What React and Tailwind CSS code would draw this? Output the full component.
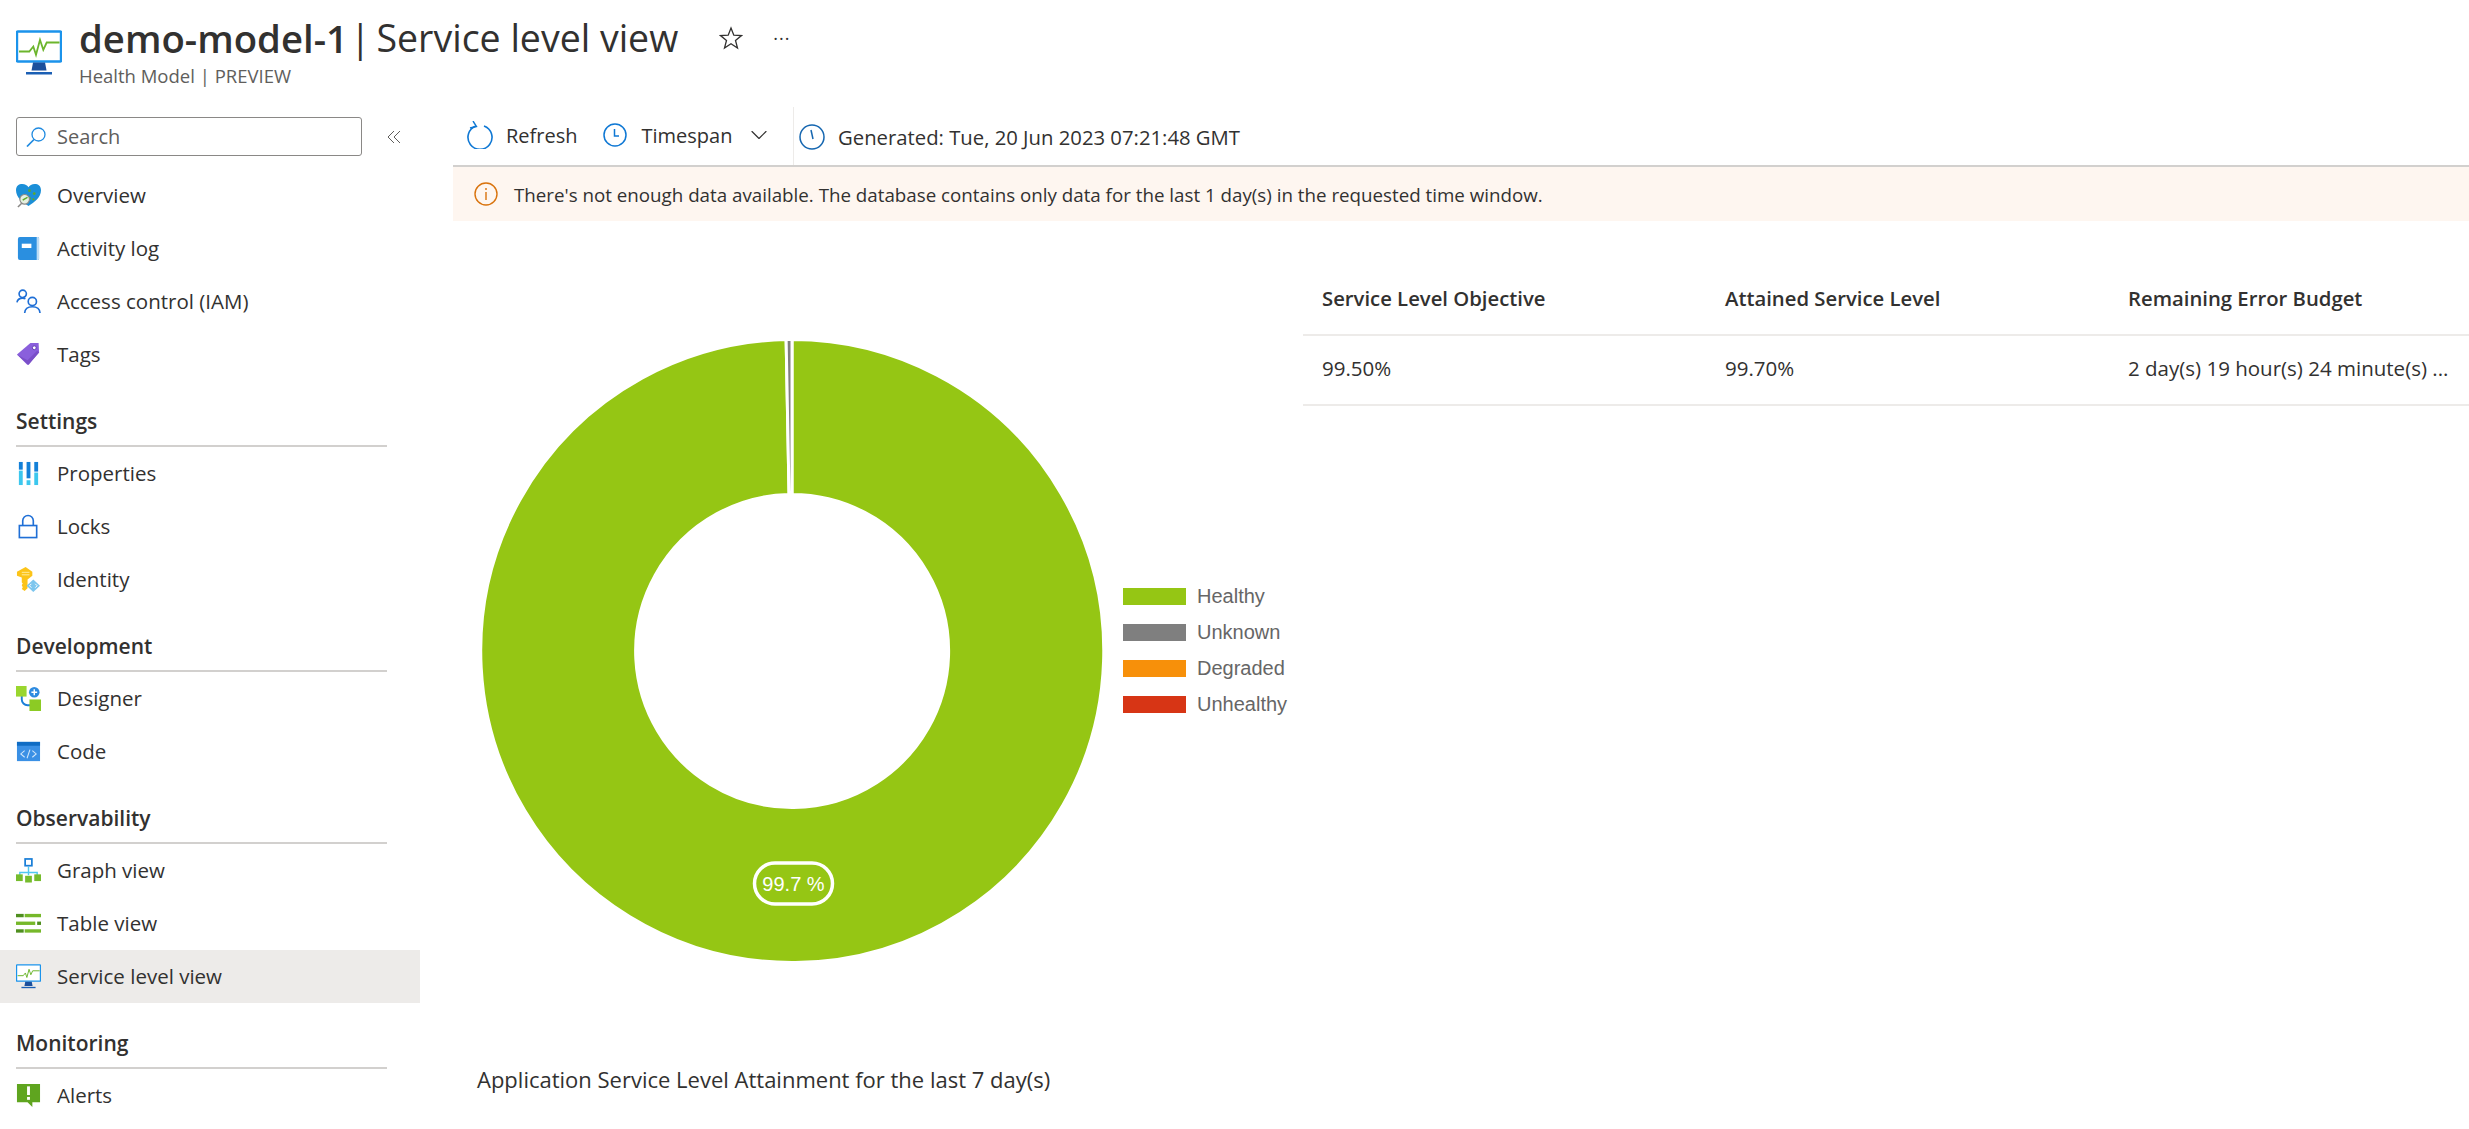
import { ChevronDown } from 'lucide-react';

const FONT = '"Open Sans", "Noto Sans", sans-serif';

function MonitorIcon({ className }) {
  return (
    <svg viewBox="0 0 46 45" className={className}>
      <rect x="1" y="1" width="44" height="30" rx="1" fill="#fff" stroke="#1b93eb" strokeWidth="2.4" />
      <path d="M17 32h12l1.5 8h-15z" fill="#1b4f9c" />
      <path d="M10 41.5h26V44H10z" fill="#1b5fb4" />
      <polyline points="3,21 13.3,21 17.3,16 20,24.3 24,9.3 27.3,19.3 30.7,12 43.5,12" fill="none" stroke="#6cb52d" strokeWidth="1.8" />
    </svg>
  );
}

function HeartIcon() {
  return (
    <svg viewBox="0 0 26 26" className="h-[25px] w-[25px]">
      <path d="M13 24C7 20 0 15 0 7.500 0 3 3 1 6.500 1 9.500 1 12 2.500 13 4.500 14 2.500 16.500 1 19.500 1 23 1 26 3 26 7.500 26 15 19 20 13 24z" fill="#1b8fd8" />
      <circle cx="14" cy="8" r="1.400" fill="#5ea82a" />
      <circle cx="19" cy="11" r="1.400" fill="#5ea82a" />
      <circle cx="14" cy="16" r="1.400" fill="#5ea82a" />
      <circle cx="18" cy="17" r="1.200" fill="#5ea82a" />
      <circle cx="9" cy="17" r="5" fill="#e6f0e0" stroke="#8a8886" strokeWidth="1.200" />
      <path d="M6 21l-4 4" stroke="#8a8886" strokeWidth="1.600" />
      <path d="M7 18c2-2 3-2 5-3" stroke="#5ea82a" strokeWidth="1.500" fill="none" />
    </svg>
  );
}

function BookIcon() {
  return (
    <svg viewBox="0 0 26 26" className="h-[25px] w-[25px]">
      <path d="M4 1h19a1 1 0 0 1 1 1v22a1 1 0 0 1-1 1H4a2 2 0 0 1-2-2V3a2 2 0 0 1 2-2z" fill="#2a8fe0" />
      <path d="M21.500 1H23a1 1 0 0 1 1 1v22a1 1 0 0 1-1 1h-1.500z" fill="#bcdcf5" />
      <rect x="6" y="8" width="10" height="4.500" fill="#fff" />
    </svg>
  );
}

function PeopleIcon() {
  return (
    <svg viewBox="0 0 26 26" className="h-[25px] w-[25px]" fill="none" stroke="#1f6fd6" strokeWidth="1.700">
      <circle cx="7" cy="5" r="3.800" />
      <path d="M1 14c.5-3 3-4.500 6-4.500 1 0 2 .2 2.800.6" />
      <circle cx="17" cy="13" r="4.300" />
      <path d="M9 25c.3-4 3.500-6.500 8-6.500s7.700 2.500 8 6.500" />
    </svg>
  );
}

function TagIcon() {
  return (
    <svg viewBox="0 0 26 26" className="h-[25px] w-[25px]">
      <path d="M1 13L15 1h8.500L24 11 12 24z" fill="#8a5fdc" />
      <path d="M1 13l12 11 11-13-2-2-10 10z" fill="#7a4fc8" />
      <circle cx="19" cy="6" r="2" fill="#fff" stroke="#5f3ab0" />
    </svg>
  );
}

function PropertiesIcon() {
  return (
    <svg viewBox="0 0 26 26" className="h-[25px] w-[25px]">
      <rect x="3" y="1" width="4" height="8" fill="#1380d8" />
      <rect x="3" y="10" width="4" height="15" fill="#3cc7ee" />
      <rect x="11" y="1" width="4" height="17" fill="#1380d8" />
      <rect x="11" y="20" width="4" height="5" fill="#3cc7ee" />
      <rect x="19" y="1" width="4" height="10" fill="#1380d8" />
      <rect x="19" y="12" width="4" height="13" fill="#3cc7ee" />
    </svg>
  );
}

function LockIcon() {
  return (
    <svg viewBox="0 0 26 26" className="h-[25px] w-[25px]" fill="none" stroke="#1f6fd6" strokeWidth="1.700">
      <rect x="3.500" y="12" width="18" height="12.500" />
      <path d="M7 12V7a5.500 5.500 0 0 1 11 0v5" />
    </svg>
  );
}

function KeyIcon() {
  return (
    <svg viewBox="0 0 26 26" className="h-[25px] w-[25px]">
      <path d="M10 0l7 5v4l-5 4v9l-3 3-3-2 1-2-1-2 1-2-1-1v-5L1 9V5z" fill="#fcc419" />
      <rect x="6" y="5" width="8" height="1.200" fill="#fde68a" />
      <rect x="6" y="7.500" width="8" height="1.200" fill="#fde68a" />
      <path d="M18 13l7 6.500-7 6.500-7-6.500z" fill="#7cc6ee" />
      <path d="M16 17.500l-2 2 2 2M20 17.500l2 2-2 2" stroke="#fff" strokeWidth="1" fill="none" />
    </svg>
  );
}

function DesignerIcon() {
  return (
    <svg viewBox="0 0 26 26" className="h-[25px] w-[25px]">
      <path d="M6 10v4a6 6 0 0 0 6 6h3" fill="none" stroke="#1b7fd8" strokeWidth="2" />
      <rect x="0" y="0" width="11" height="11" fill="#9ad62f" />
      <rect x="14" y="14" width="12" height="12" fill="#8ccb24" />
      <circle cx="19" cy="6.500" r="5.500" fill="#2e8be0" />
      <path d="M19 3.500v6M16 6.500h6" stroke="#fff" strokeWidth="1.500" />
    </svg>
  );
}

function CodeIcon() {
  return (
    <svg viewBox="0 0 26 26" className="h-[25px] w-[25px]">
      <rect x="1" y="3" width="24" height="20" fill="#3a90e5" />
      <rect x="1" y="3" width="24" height="4" fill="#0f6cc4" />
      <path d="M9 12l-4 3.500L9 19M17 12l4 3.500-4 3.500M14.500 11l-3 9" fill="none" stroke="#cfe6fa" strokeWidth="1.100" />
    </svg>
  );
}

function GraphIcon() {
  return (
    <svg viewBox="0 0 26 26" className="h-[25px] w-[25px]">
      <path d="M13 9v9M4 18v-3h18v3" fill="none" stroke="#50c8f0" strokeWidth="1.500" />
      <rect x="9.500" y="1" width="7" height="7" fill="#fff" stroke="#1b7fd8" strokeWidth="1.800" />
      <rect x="0" y="17" width="7" height="7" fill="#76bc2d" />
      <rect x="9.500" y="18.500" width="7" height="7" fill="#76bc2d" />
      <rect x="19" y="17" width="7" height="7" fill="#76bc2d" />
    </svg>
  );
}

function TableIcon() {
  return (
    <svg viewBox="0 0 26 26" className="h-[25px] w-[25px]">
      <rect x="0" y="3" width="8" height="3.500" fill="#4f8f1f" />
      <rect x="9" y="3" width="17" height="3.500" fill="#76b82a" />
      <rect x="0" y="11" width="20" height="3.500" fill="#76b82a" />
      <rect x="22" y="11" width="4" height="3.500" fill="#4f8f1f" />
      <rect x="0" y="19" width="8" height="3.500" fill="#4f8f1f" />
      <rect x="9" y="19" width="17" height="3.500" fill="#76b82a" />
    </svg>
  );
}

function AlertIcon() {
  return (
    <svg viewBox="0 0 26 26" className="h-[25px] w-[25px]">
      <path d="M1 1h24v19H17v5l-5-5H1z" fill="#5fa51f" />
      <rect x="11.500" y="3.500" width="3" height="9" fill="#fff" />
      <rect x="11.500" y="14.500" width="3" height="3" fill="#fff" />
    </svg>
  );
}

const topItems = [
  { label: 'Overview', icon: <HeartIcon /> },
  { label: 'Activity log', icon: <BookIcon /> },
  { label: 'Access control (IAM)', icon: <PeopleIcon /> },
  { label: 'Tags', icon: <TagIcon /> },
];

const sections = [
  {
    title: 'Settings',
    items: [
      { label: 'Properties', icon: <PropertiesIcon /> },
      { label: 'Locks', icon: <LockIcon /> },
      { label: 'Identity', icon: <KeyIcon /> },
    ],
  },
  {
    title: 'Development',
    items: [
      { label: 'Designer', icon: <DesignerIcon /> },
      { label: 'Code', icon: <CodeIcon /> },
    ],
  },
  {
    title: 'Observability',
    items: [
      { label: 'Graph view', icon: <GraphIcon /> },
      { label: 'Table view', icon: <TableIcon /> },
      { label: 'Service level view', icon: <MonitorIcon className="h-[25px] w-[25px]" />, active: true },
    ],
  },
  {
    title: 'Monitoring',
    items: [{ label: 'Alerts', icon: <AlertIcon /> }],
  },
];

const legend = [
  { label: 'Healthy', color: 'bg-[#95c614]' },
  { label: 'Unknown', color: 'bg-[#7f7f7f]' },
  { label: 'Degraded', color: 'bg-[#f7900a]' },
  { label: 'Unhealthy', color: 'bg-[#d73515]' },
];

function NavItem({ item }) {
  return (
    <div className={`flex h-[53px] items-center gap-4 pl-4 text-[20.5px] text-[#323130] ${item.active ? 'bg-[#edebe9]' : ''}`}>
      <span className="flex w-[25px] shrink-0 justify-center">{item.icon}</span>
      <span>{item.label}</span>
    </div>
  );
}

function Sidebar() {
  return (
    <aside className="w-[420px] shrink-0 pt-[10px]">
      <div className="flex items-center pl-4">
        <div className="flex h-[39px] w-[346px] items-center gap-[11px] rounded-[3px] border border-[#8a8886] pl-[9px] text-[20px] text-[#605e5c]">
          <svg viewBox="0 0 20 20" className="h-[20px] w-[20px]" fill="none" stroke="#1f8ae0" strokeWidth="1.300">
            <circle cx="12.500" cy="7.500" r="6.500" />
            <path d="M8 12.500L1 19.500" strokeWidth="1.700" />
          </svg>
          <span>Search</span>
        </div>
        <svg viewBox="0 0 14 14" className="ml-[25px] h-[14px] w-[14px]" fill="none" stroke="#605e5c" strokeWidth="1">
          <path d="M7 1L1 7l6 6M13 1L7 7l6 6" />
        </svg>
      </div>
      <div className="mt-[13px]">
        {topItems.map((item) => (
          <NavItem key={item.label} item={item} />
        ))}
      </div>
      {sections.map((section) => (
        <div key={section.title}>
          <div className="mx-4 mr-[33px] flex h-[66px] items-end border-b-2 border-[#d2d0ce] pb-[8px] text-[21px] font-semibold text-[#323130]">
            {section.title}
          </div>
          {section.items.map((item) => (
            <NavItem key={item.label} item={item} />
          ))}
        </div>
      ))}
    </aside>
  );
}

function Donut() {
  return (
    <svg viewBox="0 0 620 620" className="h-[620px] w-[620px] shrink-0 overflow-visible">
      <path d="M310 -1.500A311.500 311.500 0 1 1 304.130 -1.440L307.050 153.530A156.500 156.500 0 1 0 310 153.500Z" fill="#95c614" stroke="#fff" strokeWidth="3" />
      <path d="M304.130 -1.440A311.500 311.500 0 0 1 310 -1.500L310 153.500A156.500 156.500 0 0 0 307.050 153.530Z" fill="#7f7f7f" stroke="#fff" strokeWidth="3" />
      <rect x="272.500" y="522" width="78" height="41" rx="20.500" fill="none" stroke="#fff" strokeWidth="3.500" />
      <text x="311.500" y="549.500" textAnchor="middle" fill="#fff" fontSize="20" fontFamily='"Liberation Sans", sans-serif'>99.7 %</text>
    </svg>
  );
}

function Toolbar() {
  return (
    <div className="flex h-[60px] items-stretch border-b-2 border-[#d2d0ce] text-[20px] text-[#323130]">
      <div className="flex w-[340px] items-center pl-[13px]">
        <svg viewBox="0 0 28 28" className="-mt-[2px] h-[28px] w-[28px]" fill="none" stroke="#0f78d4" strokeWidth="1.600">
          <path d="M10 5a12 12 0 1 0 8 0" />
          <path d="M7 0l3.500 5.500L4 7" strokeWidth="1.400" />
        </svg>
        <span className="ml-[12px]">Refresh</span>
        <svg viewBox="0 0 24 24" className="-mt-[2px] ml-[25px] h-[24px] w-[24px]" fill="none" stroke="#0f78d4" strokeWidth="1.500">
          <circle cx="12" cy="12" r="11" />
          <path d="M11.500 6v7H16" />
        </svg>
        <span className="ml-[15px]">Timespan</span>
        <ChevronDown className="-mt-[2px] ml-[13px] h-[28px] w-[28px] text-[#323130]" strokeWidth={1} />
      </div>
      <div className="flex items-center border-l border-[#edebe9] pl-[5px] pt-[2px]">
        <svg viewBox="0 0 26 26" className="h-[26px] w-[26px]" fill="none" stroke="#1566b0" strokeWidth="1.500">
          <circle cx="13" cy="13" r="12" />
          <path d="M12 6l2 9" />
        </svg>
        <span className="ml-[13px] text-[20.3px]">Generated: Tue, 20 Jun 2023 07:21:48 GMT</span>
      </div>
    </div>
  );
}

function Banner() {
  return (
    <div className="flex h-[54px] items-center bg-[#fef6f0] pl-[21px] text-[18.75px] text-[#323130]">
      <svg viewBox="0 0 24 24" className="h-[24px] w-[24px]" fill="none" stroke="#d9730d" strokeWidth="1.400">
        <circle cx="12" cy="12" r="11" />
        <path d="M12 10v8M12 6v2" />
      </svg>
      <span className="ml-[16px] pt-[3px]">There's not enough data available. The database contains only data for the last 1 day(s) in the requested time window.</span>
    </div>
  );
}

function ServiceTable() {
  return (
    <div className="mt-[45px] flex-1 text-[#323130]">
      <div className="grid h-[70px] grid-cols-[403px_403px_1fr] items-center border-b-2 border-[#edebe9] pb-[3px] pl-[19px] text-[20.3px] font-semibold">
        <span>Service Level Objective</span>
        <span>Attained Service Level</span>
        <span>Remaining Error Budget</span>
      </div>
      <div className="grid h-[70px] grid-cols-[403px_403px_1fr] items-center border-b-2 border-[#edebe9] pb-[3px] pl-[19px] text-[20.5px]">
        <span>99.50%</span>
        <span>99.70%</span>
        <span>2 day(s) 19 hour(s) 24 minute(s) ...</span>
      </div>
    </div>
  );
}

export default function App() {
  return (
    <div className="h-[1129px] w-full overflow-hidden bg-white" style={{ fontFamily: FONT }}>
      <header className="flex h-[107px] items-start pl-4 pt-[30px]">
        <MonitorIcon className="h-[46px] w-[46px] shrink-0" />
        <div className="-mt-[30px] ml-[17px] pt-[13px]">
          <div className="flex items-center">
            <h1 className="flex text-[37.5px] leading-[50px] text-[#323130]">
              <span className="text-[38.3px] font-semibold">demo-model-1</span>
              <span className="ml-[2px]">|</span>
              <span className="ml-[6px]">Service level view</span>
            </h1>
            <svg viewBox="0 0 24 24" className="ml-[41px] h-[24px] w-[24px]" fill="none" stroke="#323130" strokeWidth="1.300">
              <path d="M12 2l2.800 7.200 7.700.4-6 4.900 2 7.500L12 17.800l-6.500 4.200 2-7.500-6-4.900 7.700-.4z" />
            </svg>
            <span className="ml-[30px] text-[18px] tracking-[1px] text-[#323130]">···</span>
          </div>
          <div className="text-[18.5px] leading-[26px] text-[#605e5c]">Health Model | PREVIEW</div>
        </div>
      </header>
      <div className="flex">
        <Sidebar />
        <main className="ml-[33px] min-w-0 flex-1">
          <Toolbar />
          <Banner />
          <div className="flex">
            <div className="w-[850px] shrink-0 pl-[24px] pt-[120px]">
              <div className="ml-[5px] flex items-center">
                <Donut />
                <div className="mb-[2px] ml-[21px] flex flex-col gap-[19px] text-[20px] leading-[17px] text-[#666666]" style={{ fontFamily: '"Liberation Sans", sans-serif' }}>
                  {legend.map((entry) => (
                    <div key={entry.label} className="flex items-center gap-[11px]">
                      <span className={`h-[17px] w-[63px] ${entry.color}`} />
                      <span>{entry.label}</span>
                    </div>
                  ))}
                </div>
              </div>
              <p className="mt-[102px] text-[22px] text-[#323130]">Application Service Level Attainment for the last 7 day(s)</p>
            </div>
            <ServiceTable />
          </div>
        </main>
      </div>
    </div>
  );
}
